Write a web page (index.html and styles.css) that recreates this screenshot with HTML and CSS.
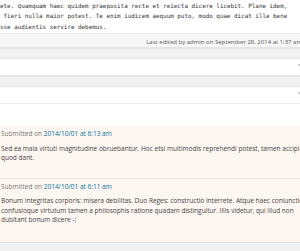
FILE: index.html
```html
<!doctype html>
<html lang="en">
    <head>
        <meta charset="UTF-8" />
        <meta name="viewport" content="width=device-width, initial-scale=1.0" />
        <title>Edit Post</title>
        <link rel="stylesheet" href="styles.css">
    </head>
    <body>
        <div class="page">
            <!-- Editor text area -->
            <div class="editor">
                <div class="editor-text">ingressio sciolat. Quod sit angulus? haec ut tandem agitur. Vulgo dicatur, quo modo
ete. Quamquam haec quidem praeposita recte et reiecta dicere licebit. Plane idem,
 fieri nulla maior potest. Te enim iudicem aequum puto, modo quae dicat ille bene
sse audientis servire debemus.</div>
            </div>
            <div class="status-info">Last edited by admin on September 28, 2014 at 1:37 am</div>

            <!-- Collapsed box -->
            <div class="postbox">
                <div class="hndle"><span class="toggle"></span></div>
            </div>

            <!-- Comments box -->
            <div class="postbox">
                <div class="hndle hndle-open"><span class="toggle"></span></div>
                <div class="inside">
                    <div class="comment-list">
                        <div class="comment">
                            <div class="submitted">Submitted on <a href="#">2014/10/01 at 6:13 am</a></div>
                            <p>Sed ea mala virtuti magnitudine obruebantur. Hoc etsi multimodis reprehendi potest, tamen accipio, quod dant.</p>
                        </div>
                        <div class="comment">
                            <div class="submitted">Submitted on <a href="#">2014/10/01 at 6:11 am</a></div>
                            <p>Bonum integritas corporis: misera debilitas. Duo Reges: constructio interrete. Atque haec coniunctio confusioque virtutum tamen a philosophis ratione quadam distinguitur. Illis videtur, qui illud non dubitant bonum dicere -;</p>
                        </div>
                    </div>
                </div>
            </div>
        </div>
    </body>
</html>
```

FILE: styles.css
```css
body {
    margin: 0;
    background: #f1f1f1;
    font-family: "Open Sans", sans-serif;
    color: #444;
    overflow: hidden;
}

.page {
    width: 310px;
}

.editor {
    height: 33px;
    overflow: hidden;
    background: #fff;
    border-bottom: 1px solid #e8e8e8;
}

.editor-text {
    margin-top: -10px;
    font-family: "DejaVu Sans Mono", monospace;
    font-size: 5.9px;
    line-height: 10.5px;
    color: #333;
    white-space: pre;
}

.status-info {
    height: 10px;
    padding: 3px 8px 0 0;
    background: #f7f7f7;
    border-bottom: 1px solid #e5e5e5;
    box-shadow: 0 1px 1px rgba(0, 0, 0, 0.04);
    font-size: 6px;
    line-height: 10px;
    color: #555;
    text-align: right;
    white-space: nowrap;
}

.postbox {
    margin-top: 10px;
    background: #fff;
    border-top: 1px solid #e5e5e5;
    border-bottom: 1px solid #e5e5e5;
    box-shadow: 0 1px 1px rgba(0, 0, 0, 0.04);
}

.hndle {
    display: flex;
    justify-content: flex-end;
    align-items: flex-start;
    height: 11px;
    padding: 5px 8px 0 0;
}

.hndle-open {
    border-bottom: 1px solid #eee;
}

.toggle {
    width: 0;
    height: 0;
    border-left: 2px solid transparent;
    border-right: 2px solid transparent;
    border-top: 3px solid #b4b4b4;
}

.inside {
    padding-top: 22px;
}

.comment-list {
    background: #fef7f1;
    padding-bottom: 2px;
}

.comment {
    padding: 3px 2px 15px 1px;
    font-size: 6.5px;
    line-height: 9.5px;
}

.comment + .comment {
    border-top: 1px solid #ebe5df;
}

.submitted {
    margin-bottom: 5px;
    color: #777;
}

.submitted a {
    color: #0074a2;
    text-decoration: none;
}

.comment p {
    margin: 0;
}
```
